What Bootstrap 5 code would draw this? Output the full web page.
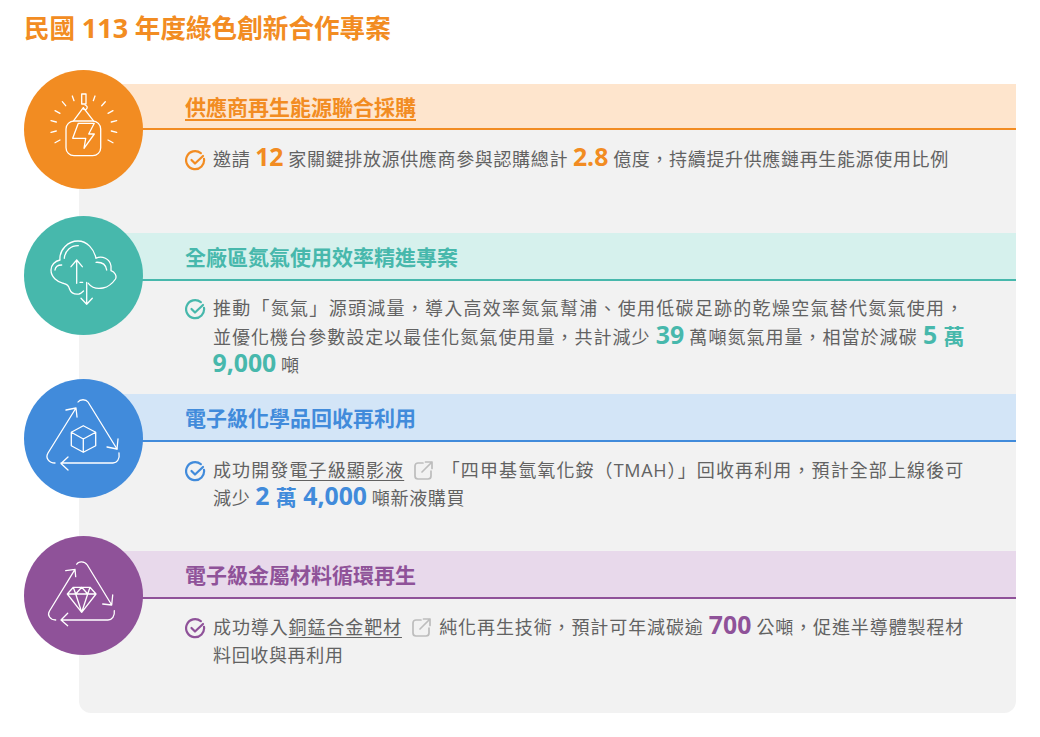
<!DOCTYPE html>
<html lang="zh-Hant">
<head>
<meta charset="utf-8">
<title>綠色創新合作專案</title>
<link href="https://cdn.jsdelivr.net/npm/bootstrap@5.3.0/dist/css/bootstrap.min.css" rel="stylesheet">
<style>
html,body{margin:0;background:#fff}
body{font-family:"Open Sans","Noto Sans CJK TC",sans-serif;color:#626262;height:737px;overflow:hidden}
.page-wrap{padding:11px 24px 0 24px}
.page-title{font-size:25.6px;font-weight:700;color:#f28c22;line-height:33px;margin:0 0 39px 0}
.title-num{font-size:27px}
.panel-box{background:#f2f2f2;margin-left:55px;border-radius:0 0 12px 12px;height:629px}
.sect{position:relative}
.sect-a{height:149px}.sect-b{height:161px}.sect-c{height:157px}.sect-d{height:162px}
.disc{position:absolute;left:-55px;top:-14px;width:119px;height:119px;border-radius:50%;z-index:2}
.sect-b .disc{top:-17px}.sect-c .disc,.sect-d .disc{top:-15px}
.disc svg{display:block;width:119px;height:119px;fill:none;stroke:#fff;stroke-width:1.3;stroke-linecap:round;stroke-linejoin:round}
.band{height:48px;border-bottom:2px solid;padding:3px 0 0 106px;display:flex;align-items:center}
.sect-a .band{height:46px}
.band-h{font-size:21px;font-weight:700;margin:0;line-height:1}
.desc{padding:13px 52px 0 106px;display:flex;font-size:18px;line-height:28.5px;letter-spacing:.65px}
.sect-a .desc{padding-top:15px}
.sect-c .desc,.sect-d .desc{padding-top:14px;line-height:28px}
.desc>svg{flex:none;width:21px;height:21px;margin:5px 7px 0 0;fill:none;stroke-width:2.2;stroke-linecap:round;stroke-linejoin:round}
.desc-body{flex:1 1 auto;min-width:0}
.jline{display:block;text-align:justify;text-align-last:justify}
.num{display:inline-block;font-size:24.8px;font-weight:700;letter-spacing:0;line-height:20px;margin:0 -.5px}
.num-c{font-size:21px}
.ulink{color:#626262;text-decoration:underline;text-underline-offset:3px}
.ext{display:inline-block;width:21px;height:21px;vertical-align:-4px;margin:0 7px 0 9px;fill:none;stroke:#bdbdbd;stroke-width:1.7;stroke-linecap:round;stroke-linejoin:round}
.tone-o .band{background:#fee5cd;border-color:#f28c22}.tone-o .band-h,.tone-o .num{color:#f28c22}.tone-o .disc{background:#f28c22}.tone-o .desc>svg{stroke:#f28c22}
.tone-t .band{background:#d6f1ed;border-color:#47b8ac}.tone-t .band-h,.tone-t .num{color:#47b8ac}.tone-t .disc{background:#47b8ac}.tone-t .desc>svg{stroke:#47b8ac}
.tone-b .band{background:#d3e5f7;border-color:#418bdb}.tone-b .band-h,.tone-b .num{color:#418bdb}.tone-b .disc{background:#418bdb}.tone-b .desc>svg{stroke:#418bdb}
.tone-p .band{background:#e8d9eb;border-color:#8f5299}.tone-p .band-h,.tone-p .num{color:#8f5299}.tone-p .disc{background:#8f5299}.tone-p .desc>svg{stroke:#8f5299}
.tone-o .band-h{text-decoration:underline;text-underline-offset:4px;text-decoration-thickness:1.5px}
</style>
</head>
<body>
<div class="page-wrap">
<h1 class="page-title">民國 <span class="title-num">113</span> 年度綠色創新合作專案</h1>
<div class="panel-box">

<section class="sect sect-a tone-o">
<div class="disc"><svg viewBox="0 0 119 119">
<rect x="57.700" y="24" width="4.300" height="10"/>
<path d="M61 35c2 .6 2.500 2 2 3.200-.7 1.700-3 1.700-3.700.5M59.300 37.700 49.700 50.700M59.300 37.700 69.300 50.700"/>
<rect x="42" y="51" width="34.700" height="34.700" rx="8"/>
<path d="M54.300 53.300H70.300L64.700 64H70.300L60 78.300 61.700 68.300H48.700Z"/>
<path d="M48.300 26 50 30.700M38.300 31.700 41.700 35.700M31 40.700 36 43.300M27 50.700 32.300 52M27 62.300 32.300 61M31 72.700 36 70M71 26 69.300 30.700M81.300 31.700 77.700 35.700M89 40.700 84 43.300M92.700 50.700 87.300 52M92.700 62.300 87.300 61M89 72.700 84 70"/>
</svg></div>
<div class="band"><h2 class="band-h">供應商再生能源聯合採購</h2></div>
<div class="desc"><svg viewBox="0 0 21 21"><path d="M19 8.800A9 9 0 1 1 15.800 3.200"/><path d="M6.500 10l3.500 3.500 8-7.500"/></svg>
<div class="desc-body">邀請 <span class="num">12</span> 家關鍵排放源供應商參與認購總計 <span class="num">2.8</span> 億度，持續提升供應鏈再生能源使用比例</div></div>
</section>

<section class="sect sect-b tone-t">
<div class="disc"><svg viewBox="0 0 119 119">
<path d="M39.300 67.300C33 66 27 61 27 54 27 49 31 45 36 44 35 34 44 25 54 25 63 25 70 33 72 42.300 78 39 86 43 87 50V54.700C91 56 93 60 91.500 63 88 68 84 71 79 72 74 73 68 72 64.300 67.300"/>
<path d="M39.300 67.300C43 68 45 70 45.500 73 47 77 51 78.500 55 78 57 77.500 58.500 76 59.500 75"/>
<path d="M40.300 42.300C41 34 47 29.700 54.300 29.700M31 54C31.500 50 34 49 37.700 49M72 46.300C78 46 82 49 82.700 54"/>
<path d="M52.700 67.300V44M47 50.700 52.700 44 58.300 50.700M56 66.300H58.700M62.700 66.300V88.300M57 82.300 62.700 88.300 68.300 82.300"/>
</svg></div>
<div class="band"><h2 class="band-h">全廠區氮氣使用效率精進專案</h2></div>
<div class="desc"><svg viewBox="0 0 21 21"><path d="M19 8.800A9 9 0 1 1 15.800 3.200"/><path d="M6.500 10l3.500 3.500 8-7.500"/></svg>
<div class="desc-body"><span class="jline">推動「氮氣」源頭減量，導入高效率氮氣幫浦、使用低碳足跡的乾燥空氣替代氮氣使用，</span><span class="jline">並優化機台參數設定以最佳化氮氣使用量，共計減少 <span class="num">39</span> 萬噸氮氣用量，相當於減碳 <span class="num">5 <span class="num-c">萬</span></span></span><span class="num">9,000</span> 噸</div></div>
</section>

<section class="sect sect-c tone-b">
<div class="disc"><svg viewBox="0 0 119 119">
<path d="M31 84C25 84 21 79 24 74L52 29M83 68 93 70 94 60M42 31 52 29 53 38"/>
<path d="M54 23C56 20 62 20 64 23L93 70"/>
<path d="M95 74C96 80 93 84 89 84H37M44 78 37 84.500 44 91"/>
<path d="M59.300 46.700 71.700 53.300V66.700L59.300 73.300 47.300 66.700V53.300ZM47.300 53.300 59.300 60 71.700 53.300M59.300 60V73.300"/>
</svg></div>
<div class="band"><h2 class="band-h">電子級化學品回收再利用</h2></div>
<div class="desc"><svg viewBox="0 0 21 21"><path d="M19 8.800A9 9 0 1 1 15.800 3.200"/><path d="M6.500 10l3.500 3.500 8-7.500"/></svg>
<div class="desc-body"><span class="jline">成功開發<a class="ulink" href="#">電子級顯影液</a><svg class="ext" viewBox="0 0 21 21"><path d="M10 3H5a3 3 0 0 0-3 3v10a3 3 0 0 0 3 3h10a3 3 0 0 0 3-3v-5M9 12 19 2M12.500 2H19v6.500"/></svg>「四甲基氫氧化銨（TMAH）」回收再利用，預計全部上線後可</span>減少 <span class="num">2 <span class="num-c">萬</span> 4,000</span> 噸新液購買</div></div>
</section>

<section class="sect sect-d tone-p">
<div class="disc"><svg viewBox="0 0 119 119">
<path d="M31.700 84C26 84 23 79 25.500 75L51 33.300M41.700 34.700 51 33.300 51.700 40.700"/>
<path d="M52.700 28.300C54.500 25 60.500 25 63.300 29L87.700 69M78.700 68 87.700 69 88.700 59"/>
<path d="M90.300 74.700C91 80 88 84 84 84H37M43.700 77.300 37 84 43.700 89.700"/>
<path d="M49.300 51.300H66L72 58 57.700 76.300 43.300 58ZM43.300 58H72M49.300 51.300 51.700 58 57.700 51.300 63.700 58 66 51.300M51.700 58 57.700 76.300 63.700 58"/>
</svg></div>
<div class="band"><h2 class="band-h">電子級金屬材料循環再生</h2></div>
<div class="desc"><svg viewBox="0 0 21 21"><path d="M19 8.800A9 9 0 1 1 15.800 3.200"/><path d="M6.500 10l3.500 3.500 8-7.500"/></svg>
<div class="desc-body"><span class="jline">成功導入<a class="ulink" href="#">銅錳合金靶材</a><svg class="ext" viewBox="0 0 21 21"><path d="M10 3H5a3 3 0 0 0-3 3v10a3 3 0 0 0 3 3h10a3 3 0 0 0 3-3v-5M9 12 19 2M12.500 2H19v6.500"/></svg>純化再生技術，預計可年減碳逾 <span class="num">700</span> 公噸，促進半導體製程材</span>料回收與再利用</div></div>
</section>

</div>
</div>
<script src="https://cdn.jsdelivr.net/npm/bootstrap@5.3.0/dist/js/bootstrap.bundle.min.js"></script>
</body>
</html>
